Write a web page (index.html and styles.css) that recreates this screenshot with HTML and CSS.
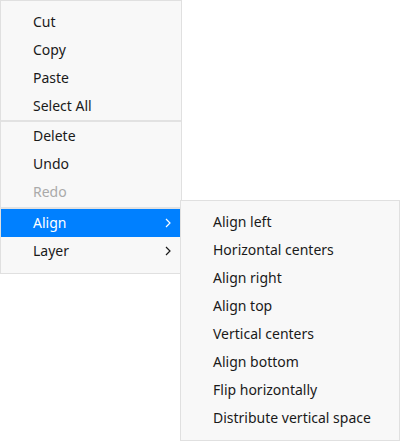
FILE: index.html
```
<!DOCTYPE html>
<html>
<head>
<meta charset="utf-8">
<link rel="stylesheet" href="styles.css">
</head>
<body>
<div class="stage">
  <div class="menu main">
    <div class="item">Cut</div>
    <div class="item">Copy</div>
    <div class="item">Paste</div>
    <div class="item">Select All</div>
    <div class="sep"></div>
    <div class="item">Delete</div>
    <div class="item">Undo</div>
    <div class="item disabled">Redo</div>
    <div class="sep sep-gap"></div>
    <div class="item active">Align<svg class="chev" width="6" height="10" viewBox="0 0 6 10"><polyline points="1,1 5,5 1,9" fill="none" stroke="currentColor" stroke-width="1.2"/></svg></div>
    <div class="item">Layer<svg class="chev" width="6" height="10" viewBox="0 0 6 10"><polyline points="1,1 5,5 1,9" fill="none" stroke="currentColor" stroke-width="1.2"/></svg></div>
  </div>
  <div class="menu sub">
    <div class="item">Align left</div>
    <div class="item">Horizontal centers</div>
    <div class="item">Align right</div>
    <div class="item">Align top</div>
    <div class="item">Vertical centers</div>
    <div class="item">Align bottom</div>
    <div class="item">Flip horizontally</div>
    <div class="item">Distribute vertical space</div>
  </div>
</div>
</body>
</html>
```
FILE: styles.css
```
html, body {
  margin: 0;
  padding: 0;
  background: #ffffff;
}
.stage {
  position: relative;
  width: 400px;
  height: 442px;
  font-family: "Noto Sans", "Open Sans", sans-serif;
  font-size: 14px;
  color: #1a1a1a;
}
.menu {
  background: #f8f8f8;
  border: 1px solid #e0e0e0;
  box-sizing: border-box;
}
.main {
  width: 182px;
  padding: 7px 0 8px 0;
}
.sub {
  position: absolute;
  left: 180px;
  top: 200px;
  width: 220px;
  height: 241px;
  padding: 7px 0 8px 0;
}
.item {
  height: 28px;
  line-height: 28px;
  padding-left: 32px;
  padding-right: 10px;
  display: flex;
  align-items: center;
  justify-content: space-between;
  white-space: nowrap;
}
.disabled {
  color: #aaaaaa;
}
.active {
  background: #0080ff;
  color: #ffffff;
}
.chev {
  display: block;
}
.sep {
  height: 2px;
  background: #e2e2e2;
}
.sep-gap {
  margin-top: 1px;
}
```
